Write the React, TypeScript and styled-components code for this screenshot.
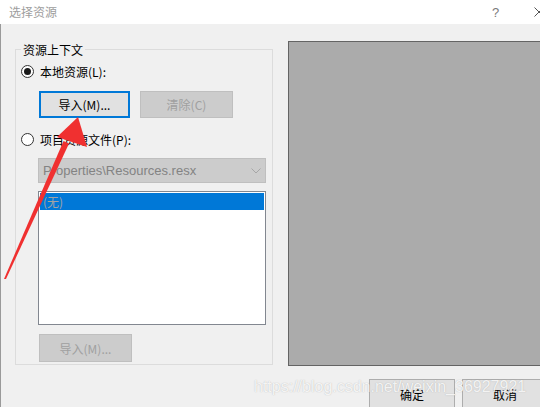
import React from "react";
import styled, { createGlobalStyle } from "styled-components";

const Global = createGlobalStyle`
  html, body { margin: 0; padding: 0; background: #f0f0f0; }
  body { font-family: "Noto Sans CJK SC", "Liberation Sans", sans-serif; }
`;

const FONT = `"Noto Sans CJK SC", "Liberation Sans", sans-serif`;

const Screen = styled.div`
  position: relative;
  width: 540px;
  height: 407px;
  overflow: hidden;
  background: #f0f0f0;
  font-family: ${FONT};
  font-size: 12px;
  color: #000;
`;

const TitleBar = styled.div`
  height: 24px;
  background: #fff;
  display: flex;
  align-items: center;
  padding-left: 9px;
  width: 560px;
  box-sizing: border-box;
`;

const TitleText = styled.span`
  color: #9d9d9d;
  font-size: 12px;
  flex: 1;
  line-height: 24px;
`;

const HelpMark = styled.span`
  color: #7a7a7a;
  font-family: "Liberation Sans", sans-serif;
  font-size: 13px;
  width: 42px;
  text-align: left;
`;

const CloseMark = styled.svg`
  width: 10px;
  height: 10px;
  margin-right: 16px;
`;

const Body = styled.div`
  border-left: 1px solid #9a9a9a;
  height: 383px;
  box-sizing: border-box;
  padding: 17px 0 0 14px;
  width: 580px;
`;

const MainRow = styled.div`
  display: flex;
  align-items: flex-start;
  gap: 15px;
`;

const GroupBox = styled.div`
  position: relative;
  margin-top: 8px;
  width: 258px;
  height: 316px;
  box-sizing: border-box;
  border: 1px solid #dcdcdc;
  padding: 15px 0 0 5px;
  display: flex;
  flex-direction: column;
`;

const Legend = styled.span`
  position: absolute;
  top: -9px;
  left: 5px;
  padding: 0 2px;
  background: #f0f0f0;
  line-height: 17px;
`;

const RadioRow = styled.label`
  display: flex;
  align-items: center;
  gap: 6px;
  height: 13px;
  line-height: 13px;
`;

const RadioCircle = styled.span<{ $checked?: boolean }>`
  width: 13px;
  height: 13px;
  box-sizing: border-box;
  border-radius: 50%;
  border: 1px solid #333;
  background: #fff;
  display: flex;
  align-items: center;
  justify-content: center;
  &::after {
    content: "";
    display: ${(p) => (p.$checked ? "block" : "none")};
    width: 7px;
    height: 7px;
    border-radius: 50%;
    background: #1a1a1a;
  }
`;

const Indent = styled.div<{ $top: number }>`
  padding-left: 17px;
  margin-top: ${(p) => p.$top}px;
  display: flex;
  flex-direction: column;
`;

const ButtonRow = styled.div`
  display: flex;
  gap: 10px;
  margin-left: 1px;
`;

const Button = styled.button<{ $w: number; $h?: number; $focused?: boolean }>`
  width: ${(p) => p.$w}px;
  height: ${(p) => p.$h ?? 27}px;
  box-sizing: border-box;
  margin: 0;
  padding: 0;
  font-family: ${FONT};
  font-size: 12px;
  color: #000;
  background: #e1e1e1;
  border: ${(p) => (p.$focused ? "2px solid #0078d7" : "1px solid #adadad")};
  &:disabled {
    background: #cccccc;
    border: 1px solid #bfbfbf;
    color: #a0a0a0;
  }
`;

const Select = styled.div`
  width: 228px;
  height: 25px;
  box-sizing: border-box;
  background: #cccccc;
  border: 1px solid #bfbfbf;
  display: flex;
  align-items: center;
  padding: 0 4px 0 4px;
  color: #838383;
  font-family: "Liberation Sans", sans-serif;
  font-size: 13px;
`;

const SelectText = styled.span`
  flex: 1;
`;

const ListBox = styled.div`
  margin-top: 8px;
  width: 228px;
  height: 134px;
  box-sizing: border-box;
  border: 1px solid #828790;
  background: #fff;
  padding: 1px;
`;

const ListItem = styled.div<{ $selected?: boolean }>`
  height: 17px;
  line-height: 17px;
  padding-left: 3px;
  background: ${(p) => (p.$selected ? "#0078d7" : "transparent")};
  color: #a3a3a3;
`;

const Preview = styled.div`
  width: 270px;
  height: 325px;
  box-sizing: border-box;
  background: #ababab;
  border: 1px solid #646464;
`;

const Footer = styled.div`
  display: flex;
  gap: 7px;
  margin-top: 13px;
  padding-left: 354px;
`;

const Watermark = styled.div`
  position: absolute;
  left: 254px;
  top: 378px;
  font-family: "Liberation Sans", sans-serif;
  font-size: 16px;
  color: rgba(255, 255, 255, 0.85);
  text-shadow: 0 0 1px rgba(120, 120, 120, 0.5);
  white-space: nowrap;
  pointer-events: none;
`;

const ArrowLayer = styled.svg`
  position: absolute;
  left: 0;
  top: 0;
  pointer-events: none;
`;

export default function App() {
  return (
    <Screen>
      <Global />
      <TitleBar>
        <TitleText>选择资源</TitleText>
        <HelpMark>?</HelpMark>
        <CloseMark viewBox="0 0 10 10">
          <path d="M0.5 0.5 L9.5 9.5 M9.5 0.5 L0.5 9.5" stroke="#555" strokeWidth="1" fill="none" />
        </CloseMark>
      </TitleBar>
      <Body>
        <MainRow>
          <GroupBox>
            <Legend>资源上下文</Legend>
            <RadioRow>
              <RadioCircle $checked />
              <span>本地资源(L):</span>
            </RadioRow>
            <Indent $top={13}>
              <ButtonRow>
                <Button $w={91} $focused>导入(M)...</Button>
                <Button $w={93} disabled>清除(C)</Button>
              </ButtonRow>
            </Indent>
            <Indent $top={15} style={{ paddingLeft: 0 }}>
              <RadioRow>
                <RadioCircle />
                <span>项目资源文件(P):</span>
              </RadioRow>
            </Indent>
            <Indent $top={12}>
              <Select>
                <SelectText>Properties\Resources.resx</SelectText>
                <svg width="10" height="6" viewBox="0 0 10 6">
                  <path d="M0.5 0.5 L5 5 L9.5 0.5" stroke="#a6a6a6" strokeWidth="1" fill="none" />
                </svg>
              </Select>
              <ListBox>
                <ListItem $selected>(无)</ListItem>
              </ListBox>
              <ButtonRow style={{ marginTop: 9 }}>
                <Button $w={93} $h={28} disabled>导入(M)...</Button>
              </ButtonRow>
            </Indent>
          </GroupBox>
          <Preview />
        </MainRow>
        <Footer>
          <Button $w={86} $h={30}>确定</Button>
          <Button $w={86} $h={30}>取消</Button>
        </Footer>
      </Body>
      <Watermark>https://blog.csdn.net/weixin_36927921</Watermark>
      <ArrowLayer width="100" height="290" viewBox="0 0 100 290">
        <polygon points="4,279 6,279 69,143.5 63.5,141" fill="#f03030" />
        <polygon points="78,117 87,147 57,137" fill="#f03030" />
      </ArrowLayer>
    </Screen>
  );
}
